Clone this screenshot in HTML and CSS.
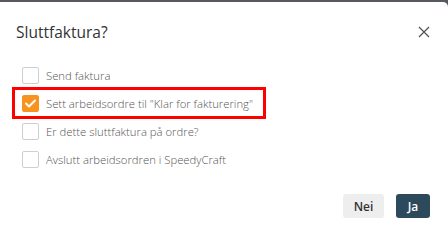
FILE: index.html
```html
<!DOCTYPE html>
<html lang="no">
<head>
<meta charset="utf-8">
<title>Sluttfaktura?</title>
<link rel="stylesheet" href="styles.css">
</head>
<body>
<div class="dialog">
  <div class="header">
    <h1 class="title">Sluttfaktura?</h1>
    <button class="close" aria-label="Lukk">
      <svg width="12" height="12" viewBox="0 0 12 12"><path d="M1 1L11 11M11 1L1 11" stroke="#555" stroke-width="1.3" fill="none"/></svg>
    </button>
  </div>
  <div class="body">
    <label class="row"><span class="box"></span><span class="text">Send faktura</span></label>
    <label class="row highlight"><span class="box checked"><svg width="11" height="9" viewBox="0 0 11 9"><path d="M1 4.5L4 7.5L10 1.5" stroke="#fff" stroke-width="2" fill="none" stroke-linecap="round" stroke-linejoin="round"/></svg></span><span class="text">Sett arbeidsordre til "Klar for fakturering"</span></label>
    <label class="row"><span class="box"></span><span class="text">Er dette sluttfaktura på ordre?</span></label>
    <label class="row"><span class="box"></span><span class="text">Avslutt arbeidsordren i SpeedyCraft</span></label>
  </div>
  <div class="footer">
    <button class="btn btn-no">Nei</button>
    <button class="btn btn-yes">Ja</button>
  </div>
</div>
</body>
</html>
```
FILE: styles.css
```css
html {
  background: #fff;
}
html, body {
  margin: 0;
  padding: 0;
}
body {
  width: 448px;
  height: 236px;
  padding-top: 2px;
  box-sizing: border-box;
  overflow: hidden;
  background: #565a5e;
  font-family: "Open Sans", "Liberation Sans", sans-serif;
}
.dialog {
  background: #fff;
  border-top-right-radius: 5px;
  height: 234px;
  box-sizing: border-box;
  display: flex;
  flex-direction: column;
}
.header {
  display: flex;
  align-items: center;
  justify-content: space-between;
  padding: 18px 18px 0 16px;
  height: 24px;
}
.title {
  margin: 0;
  font-size: 15.5px;
  font-weight: 400;
  color: #333;
  line-height: 24px;
}
.close {
  border: 0;
  background: none;
  padding: 0;
  width: 12px;
  height: 12px;
  display: flex;
}
.body {
  padding: 17px 0 0 12px;
  display: flex;
  flex-direction: column;
  align-items: flex-start;
}
.row {
  display: flex;
  align-items: center;
  gap: 7px;
  height: 28px;
  padding: 0 10px;
  box-sizing: border-box;
  white-space: nowrap;
}
.row.highlight {
  border: 3px solid #ff0000;
  height: 32px;
  margin: -2px 0;
  padding: 0 7px;
  width: 254px;
}
.box {
  width: 15px;
  height: 15px;
  border: 1px solid #cfcfcf;
  border-radius: 2px;
  box-sizing: content-box;
  display: flex;
  align-items: center;
  justify-content: center;
  flex: none;
}
.box.checked {
  background: #f7931e;
  border-color: #f7931e;
}
.text {
  font-size: 11.3px;
  font-weight: 300;
  color: #555;
}
.footer {
  margin-top: auto;
  display: flex;
  justify-content: flex-end;
  gap: 12px;
  padding: 0 18px 18px 0;
}
.btn {
  border: 0;
  border-radius: 3px;
  height: 24px;
  font-family: "Open Sans", "Liberation Sans", sans-serif;
  font-size: 12px;
  font-weight: 600;
  padding: 0;
}
.btn-no {
  width: 41px;
  background: #eeeeee;
  color: #333;
}
.btn-yes {
  width: 34px;
  background: #2c4a5c;
  color: #fff;
}
```
